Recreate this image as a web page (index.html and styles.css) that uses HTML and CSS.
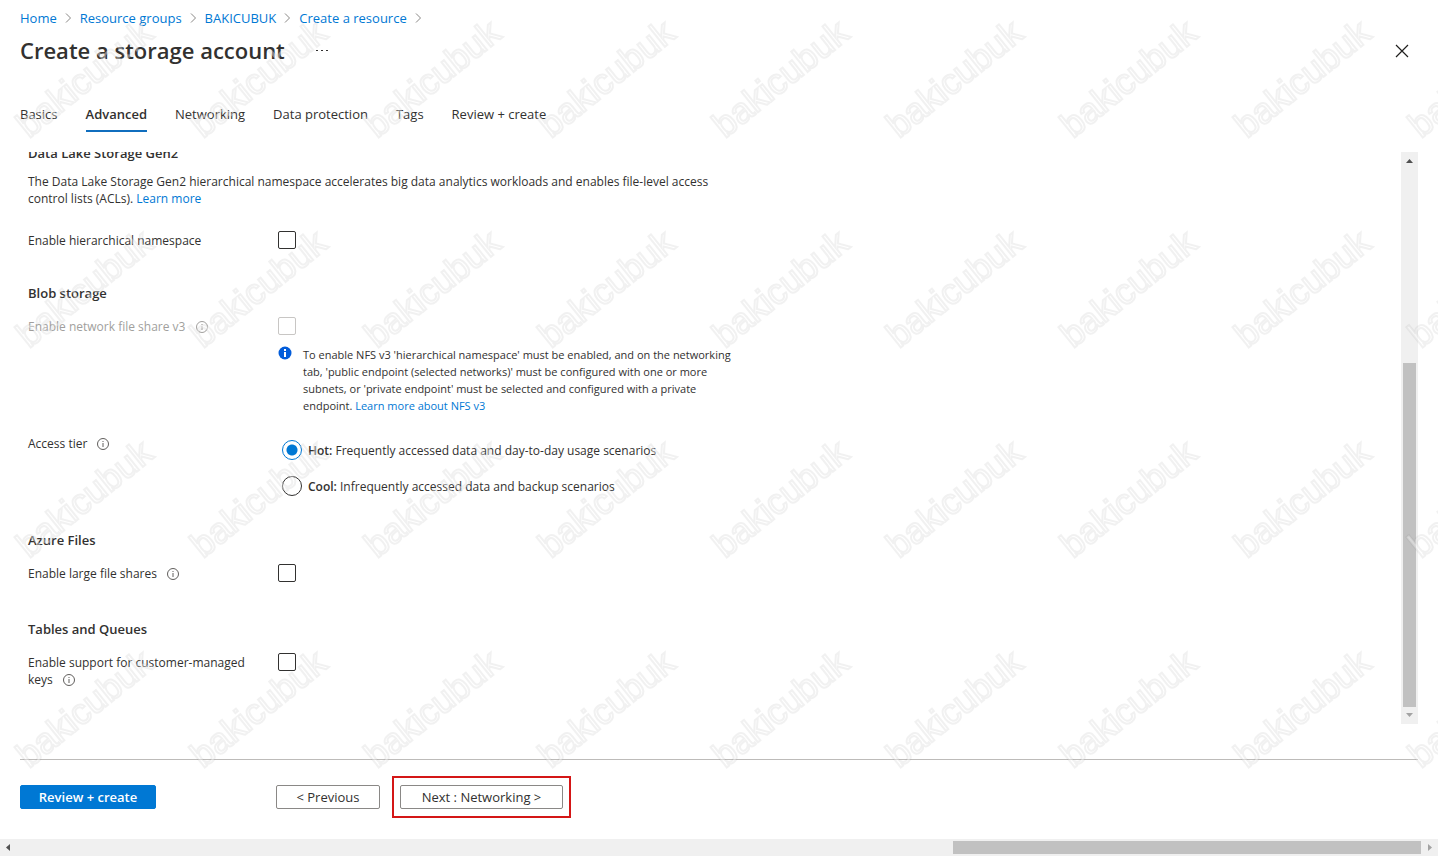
FILE: index.html
```html
<!DOCTYPE html>
<html lang="en">
<head>
<meta charset="UTF-8">
<meta name="viewport" content="width=device-width, initial-scale=1.0">
<title>Create a storage account</title>
<link rel="stylesheet" href="styles.css">
</head>
<body>
<svg class="sprite" aria-hidden="true">
  <symbol id="chevron" viewBox="0 0 6 12">
    <path d="M0.5 1.5 L5 6 L0.5 10.5" fill="none" stroke="#8a8886"/>
  </symbol>
  <symbol id="info" viewBox="0 0 14 14">
    <circle cx="7" cy="7" r="5.5" fill="none" stroke="currentColor"/>
    <path d="M7 6v4M7 4v1" fill="none" stroke="currentColor"/>
  </symbol>
</svg>

<header class="header">
  <nav class="breadcrumb">
    <a href="#">Home</a>
    <svg class="chevron"><use href="#chevron"/></svg>
    <a href="#">Resource groups</a>
    <svg class="chevron"><use href="#chevron"/></svg>
    <a href="#">BAKICUBUK</a>
    <svg class="chevron"><use href="#chevron"/></svg>
    <a href="#">Create a resource</a>
    <svg class="chevron"><use href="#chevron"/></svg>
  </nav>
  <div class="title-bar">
    <h1>Create a storage account</h1>
    <button class="icon-button" type="button" aria-label="More">
      <svg width="12" height="4" viewBox="0 0 12 4" fill="#323130"><path d="M0 1h2v1H0zM5 1h2v1H5zM10 1h2v1h-2z"/></svg>
    </button>
    <button class="icon-button close" type="button" aria-label="Close">
      <svg width="14" height="14" viewBox="0 0 14 14"><path d="M1 1l12 12M13 1L1 13" stroke="#201f1e" stroke-width="1.2"/></svg>
    </button>
  </div>
  <nav class="tabs">
    <a href="#">Basics</a>
    <a href="#" class="active">Advanced</a>
    <a href="#">Networking</a>
    <a href="#">Data protection</a>
    <a href="#">Tags</a>
    <a href="#">Review + create</a>
  </nav>
</header>

<main class="content">
  <form class="form">
    <section class="section">
      <h2>Data Lake Storage Gen2</h2>
      <p class="description">The Data Lake Storage Gen2 hierarchical namespace accelerates big data analytics workloads and enables file-level access control lists (ACLs). <a href="#">Learn more</a></p>
      <div class="row">
        <label for="hns">Enable hierarchical namespace</label>
        <input type="checkbox" id="hns">
      </div>
    </section>

    <section class="section">
      <h2>Blob storage</h2>
      <div class="row disabled">
        <label for="nfs">Enable network file share v3 <svg class="info"><use href="#info"/></svg></label>
        <input type="checkbox" id="nfs" disabled>
      </div>
      <div class="note">
        <svg width="14" height="14" viewBox="0 0 14 14">
          <circle cx="7" cy="7" r="6.5" fill="#015cda"/>
          <path d="M6 6h2v5H6zM6 3h2v2H6z" fill="#fff"/>
        </svg>
        <p>To enable NFS v3 'hierarchical namespace' must be enabled, and on the networking tab, 'public endpoint (selected networks)' must be configured with one or more subnets, or 'private endpoint' must be selected and configured with a private endpoint. <a href="#">Learn more about NFS v3</a></p>
      </div>
      <div class="row" role="radiogroup" aria-labelledby="tier">
        <span id="tier">Access tier <svg class="info"><use href="#info"/></svg></span>
        <div class="radios">
          <label><input type="radio" name="tier" checked><span><b>Hot:</b> Frequently accessed data and day-to-day usage scenarios</span></label>
          <label><input type="radio" name="tier"><span><b>Cool:</b> Infrequently accessed data and backup scenarios</span></label>
        </div>
      </div>
    </section>

    <section class="section files">
      <h2>Azure Files</h2>
      <div class="row">
        <label for="lfs">Enable large file shares <svg class="info"><use href="#info"/></svg></label>
        <input type="checkbox" id="lfs">
      </div>
    </section>

    <section class="section">
      <h2>Tables and Queues</h2>
      <div class="row">
        <label for="cmk">Enable support for customer-managed keys <svg class="info"><use href="#info"/></svg></label>
        <input type="checkbox" id="cmk">
      </div>
    </section>
  </form>
  <div class="scrollbar vertical">
    <svg width="17" height="17" viewBox="0 0 17 17"><path d="M5 11h7L8.5 7z" fill="#505050"/></svg>
    <div class="track"><div class="thumb"></div></div>
    <svg width="17" height="17" viewBox="0 0 17 17"><path d="M5 6h7L8.5 10z" fill="#a3a3a3"/></svg>
  </div>
</main>

<footer class="footer">
  <button class="button primary" type="button">Review + create</button>
  <button class="button previous" type="button">&lt; Previous</button>
  <button class="button next" type="button">Next : Networking &gt;</button>
</footer>

<div class="scrollbar horizontal">
  <svg width="17" height="17" viewBox="0 0 17 17"><path d="M10 5v7L6 8.500z" fill="#505050"/></svg>
  <div class="track"><div class="thumb"></div></div>
  <svg width="17" height="17" viewBox="0 0 17 17"><path d="M7 5v7l4-3.500z" fill="#a3a3a3"/></svg>
</div>

<svg class="watermark" aria-hidden="true">
  <defs>
    <pattern id="mark" width="174" height="210" patternUnits="userSpaceOnUse">
      <text class="mark-text" transform="translate(29 139) rotate(-39)">bakicubuk</text>
    </pattern>
  </defs>
  <rect width="100%" height="100%" fill="url(#mark)"/>
</svg>
</body>
</html>
```
FILE: styles.css
```css
* {
  box-sizing: border-box;
}
body {
  margin: 0;
  height: 100vh;
  display: flex;
  flex-direction: column;
  overflow: hidden;
  background-color: #fff;
  color: #323130;
  font-family: "Open Sans", "Noto Sans", sans-serif;
  font-size: 12px;
  line-height: 17px;
}
h1, h2, p {
  margin: 0;
}
a {
  color: #0078d4;
  text-decoration: none;
}
b {
  font-weight: 600;
}
button {
  font-family: inherit;
  cursor: pointer;
}
.sprite {
  display: none;
}

/* Header */
.header {
  padding: 8px 20px 0;
}
.breadcrumb {
  display: flex;
  align-items: center;
  gap: 8px;
  font-size: 13px;
  line-height: 20px;
}
.chevron {
  width: 7px;
  height: 12px;
}
.title-bar {
  display: flex;
  align-items: center;
  gap: 27px;
  margin-top: 7px;
}
.title-bar h1 {
  padding-bottom: 2px;
  font-size: 22px;
  line-height: 30px;
  font-weight: 600;
}
.icon-button {
  display: flex;
  padding: 4px;
  border: none;
  background: none;
}
.close {
  margin-left: auto;
  margin-right: 5px;
}
.tabs {
  display: flex;
  gap: 28px;
  margin-top: 36px;
  font-size: 13px;
  line-height: 22px;
}
.tabs a {
  padding-bottom: 5px;
  color: #323130;
  border-bottom: 2px solid transparent;
}
.tabs .active {
  font-weight: 600;
  border-bottom-color: #106ebe;
}

/* Scrolled form */
.content {
  flex: 1;
  min-height: 0;
  display: flex;
  justify-content: space-between;
  margin: 20px 20px 0;
  overflow: hidden;
}
.form {
  flex: 1;
  max-width: 730px;
  margin-top: -9px;
  padding-left: 8px;
}
.section {
  margin-bottom: 34px;
}
.files {
  margin-bottom: 37px;
}
.section h2 {
  margin-bottom: 14px;
  font-size: 13px;
  line-height: 20px;
  font-weight: 600;
}
.description {
  margin: -4px 0 24px;
}
.row {
  display: grid;
  grid-template-columns: 226px 1fr;
  column-gap: 24px;
  align-items: start;
}
.row > label, .row > span {
  padding-top: 1px;
}
.disabled {
  color: #a19f9d;
}
.info {
  width: 14px;
  height: 14px;
  margin-left: 6px;
  vertical-align: -3px;
  color: #605e5c;
}
.disabled .info {
  color: #a19f9d;
}
input {
  appearance: none;
  flex: none;
  margin: 0;
  border: 1px solid #323130;
  background-color: #fff;
}
input[type="checkbox"] {
  width: 18px;
  height: 18px;
  border-radius: 2px;
}
input:disabled {
  border-color: #c8c6c4;
}
input[type="radio"] {
  width: 20px;
  height: 20px;
  border-radius: 50%;
}
input[type="radio"]:checked {
  border-color: #0078d4;
  background: radial-gradient(circle, #0078d4 5px, #fff 6px);
}
.note {
  display: flex;
  gap: 11px;
  margin: 11px 0 20px 250px;
  font-size: 11px;
}
.note p {
  max-width: 440px;
}
.note svg {
  flex: none;
}
.radios {
  display: flex;
  flex-direction: column;
  gap: 16px;
  padding: 6px 0 0 4px;
}
.radios label {
  display: flex;
  align-items: center;
  gap: 6px;
}

/* Scrollbars */
.scrollbar {
  display: flex;
  background-color: #f0f0f0;
}
.scrollbar svg {
  flex: none;
}
.track {
  flex: 1;
  display: flex;
  justify-content: flex-end;
}
.thumb {
  background-color: #c1c1c1;
}
.vertical, .vertical .track {
  flex-direction: column;
}
.vertical {
  width: 17px;
}
.vertical .thumb {
  height: 64%;
  margin: 0 2px;
}
.horizontal .thumb {
  width: calc(100% / 3);
  margin: 2px 0;
}

/* Footer */
.footer {
  display: flex;
  margin: 35px 20px 0;
  padding: 25px 0 30px;
  border-top: 1px solid #bdbbb9;
}
.button {
  height: 24px;
  padding: 0;
  border: 1px solid #8a8886;
  border-radius: 2px;
  background-color: #fff;
  color: #323130;
  font-size: 13px;
  line-height: 22px;
}
.primary {
  width: 136px;
  border-color: #0078d4;
  background-color: #0078d4;
  color: #fff;
  font-weight: 600;
}
.previous {
  width: 104px;
  margin-left: 120px;
}
.next {
  position: relative;
  width: 163px;
  margin-left: 20px;
}
/* Highlight round the next step */
.next::after {
  content: "";
  position: absolute;
  inset: -10px -9px;
  border: 2px solid #d41616;
}

.watermark {
  position: fixed;
  top: 0;
  left: 0;
  width: 100%;
  height: 100%;
  pointer-events: none;
}
.mark-text {
  font-family: "Liberation Sans", Arial, sans-serif;
  font-size: 36px;
  fill: rgba(255, 255, 255, 0.4);
  stroke: rgba(120, 120, 120, 0.1);
  stroke-width: 2px;
}
```
